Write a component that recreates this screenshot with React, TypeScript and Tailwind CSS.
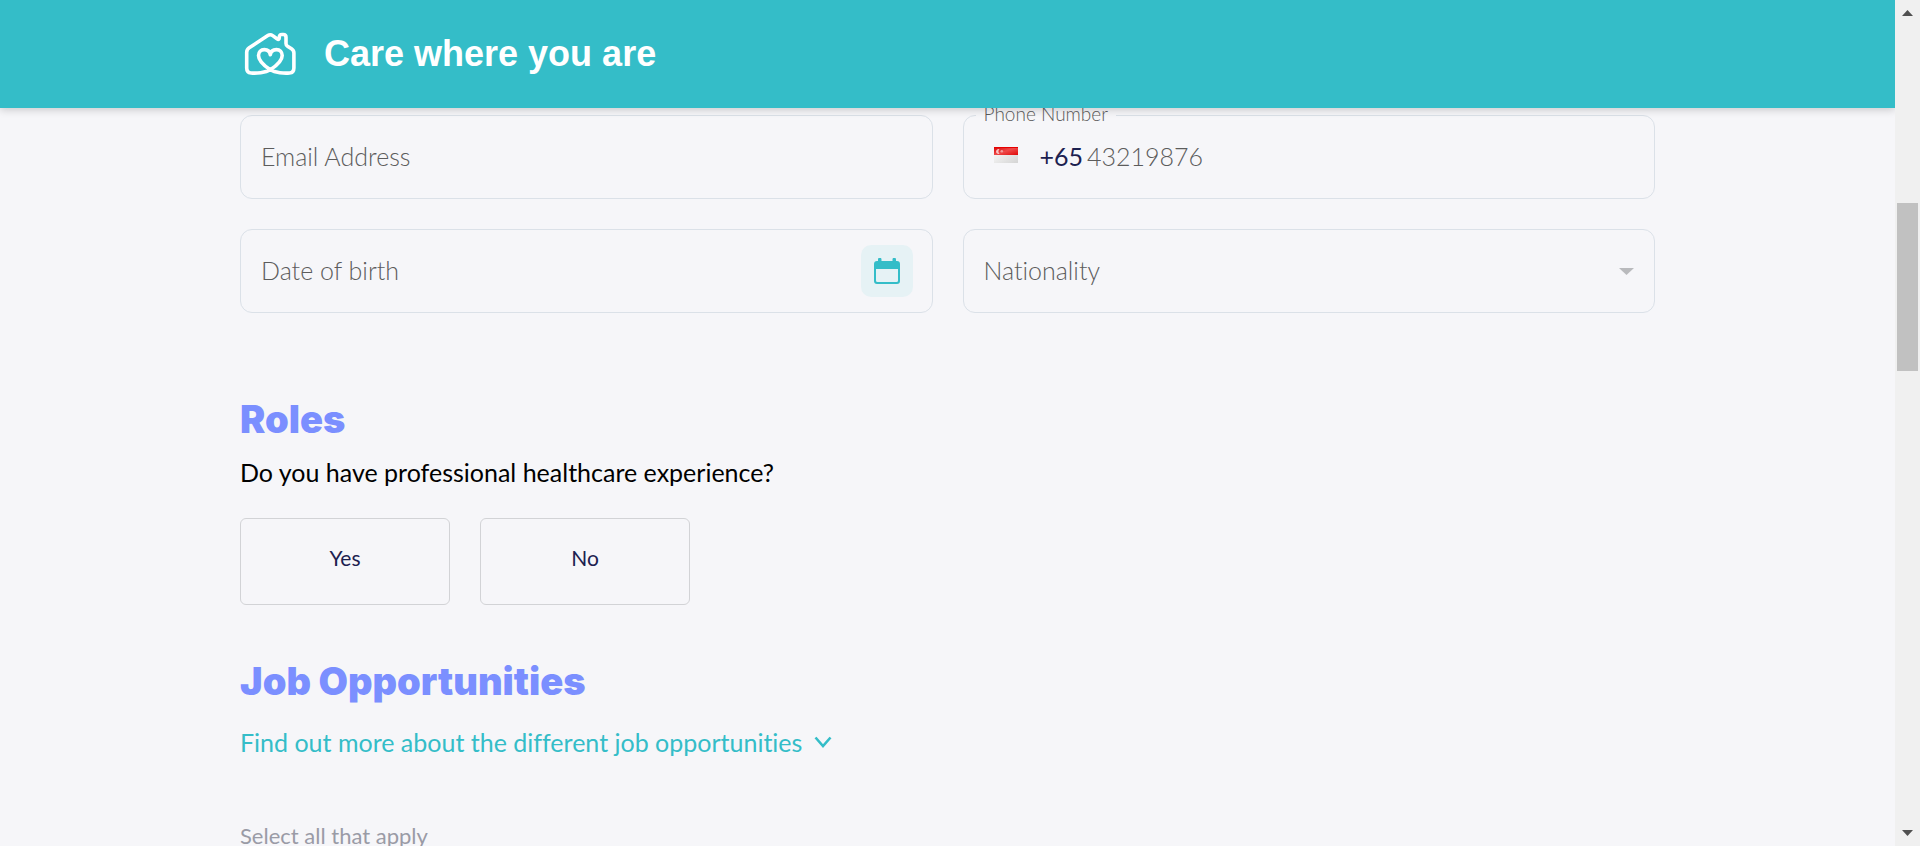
import type { ReactNode } from "react";

const fieldBox =
  "flex h-[84px] items-center rounded-xl border border-[#dbe1e8] pl-5 pr-[19px]";
const fieldText =
  "w-full min-w-0 bg-transparent text-[25px] font-light text-[#3f3f3f] outline-none placeholder:text-[#5c5c5c] placeholder:opacity-100";

function HouseLogo() {
  return (
    <svg
      className="h-11 w-[52px] shrink-0"
      viewBox="0 0 52 44"
      fill="none"
      stroke="white"
      strokeWidth="3.6"
      strokeLinecap="round"
      strokeLinejoin="round"
      aria-hidden="true"
    >
      <path d="M26.300 37.800C20.500 34 14.500 29.500 14.500 23.500C14.500 20 17 17.600 20.300 17.600C23.500 17.600 25.900 19.500 26.300 22.800C26.700 19.500 29.100 17.600 32.500 17.600C35.800 17.600 38.200 20 38.200 23.500C38.200 29.500 32.100 34 26.300 37.800C21.500 40.800 12 41.500 7 41C4 40.700 2.700 39 2.700 36V20.500C2.700 18.200 3.200 17.100 5.200 15.800L23.800 3.600C25.600 2.400 27 2.400 28.700 3.600L33 6.800C34.600 7.900 35.300 7.200 35.300 5.500C35.300 3.200 36 2.500 38 2.500H39.300C41.200 2.500 42 3.300 42 5.200V11.500C42 13 42.300 13.500 43.500 14.200L47.500 16.800C49.500 18.100 49.900 18.900 49.900 21V36C49.900 39 48.500 40.700 45.500 41C40.500 41.500 31.100 40.800 26.300 37.800Z" />
    </svg>
  );
}

function SingaporeFlag() {
  return (
    <svg className="mb-1 h-4 w-6 shrink-0" viewBox="0 0 24 16" aria-hidden="true">
      <defs>
        <linearGradient id="flagRed" x1="0" y1="0" x2="1" y2="1">
          <stop offset="0" stopColor="#d90000" />
          <stop offset="0.5" stopColor="#ee4a4a" />
          <stop offset="1" stopColor="#e00808" />
        </linearGradient>
        <linearGradient id="flagWhite" x1="0" y1="0" x2="1" y2="1">
          <stop offset="0" stopColor="#ffffff" />
          <stop offset="1" stopColor="#d4d4d4" />
        </linearGradient>
      </defs>
      <rect width="24" height="16" fill="url(#flagWhite)" />
      <rect width="24" height="8" fill="url(#flagRed)" />
      <rect width="24" height="1" fill="#e60000" />
      <path d="M5.500 2.200a2.500 2.500 0 1 0 0 4.600a3 3 0 0 1 0-4.600Z" fill="#f9c4c4" />
      <circle cx="7.800" cy="4.300" r="1.300" fill="#f39a9a" />
    </svg>
  );
}

function CalendarIcon() {
  return (
    <svg className="h-[26px] w-[26px]" viewBox="0 0 26 26" aria-hidden="true">
      <path
        fill="#34bdc8"
        fillRule="evenodd"
        d="M4 1.500a1.500 1.500 0 0 1 3.500 0V3H18.500V1.500a1.500 1.500 0 0 1 3.500 0V3H23a3 3 0 0 1 3 3V23a3 3 0 0 1-3 3H3a3 3 0 0 1-3-3V6a3 3 0 0 1 3-3H4ZM2 11V22.500A1.500 1.500 0 0 0 3.500 24H22.500A1.500 1.500 0 0 0 24 22.500V11Z"
      />
    </svg>
  );
}

function SectionTitle({ children }: { children: ReactNode }) {
  return (
    <h2 className="font-['Inter',sans-serif] text-[38px] leading-[42px] font-black text-[#7b8fff]">
      {children}
    </h2>
  );
}

function ChoiceButton({ children }: { children: ReactNode }) {
  return (
    <button
      type="button"
      className="h-[87px] w-[210px] rounded-md border border-[#d2d3d6] pb-2 text-[21px] text-[#1c2150]"
    >
      {children}
    </button>
  );
}

function ScrollRail() {
  return (
    <div
      className="relative z-20 flex w-[25px] shrink-0 flex-col items-center bg-[#f0f0f0]"
      aria-hidden="true"
    >
      <svg className="mt-[10px] h-[6px] w-[11px]" viewBox="0 0 11 6">
        <path d="M0 6L5.500 0L11 6Z" fill="#505050" />
      </svg>
      <div className="mt-[187px] h-[168px] w-[21px] bg-[#c1c1c1]" />
      <svg className="mt-auto mb-[10px] h-[6px] w-[11px]" viewBox="0 0 11 6">
        <path d="M0 0H11L5.500 6Z" fill="#505050" />
      </svg>
    </div>
  );
}

export default function App() {
  return (
    <div className="flex h-screen overflow-hidden bg-[#f6f6f9] font-['Lato',sans-serif] [font-variant-ligatures:none]">
      <div className="flex min-w-0 flex-1 flex-col">
        <header className="relative z-10 shrink-0 bg-[#34bdc8] px-6 shadow-[0_2px_8px_rgba(0,0,0,0.18)]">
          <div className="mx-auto flex h-[108px] w-full max-w-[1415px] items-center gap-7 pl-1">
            <HouseLogo />
            <h1 className="font-['Liberation_Sans',Arial,sans-serif] text-[36px] font-bold text-white">
              Care where you are
            </h1>
          </div>
        </header>

        <main className="min-h-0 flex-1 px-6 pt-[7px]">
          <form className="mx-auto w-full max-w-[1415px]">
            <div className="grid grid-cols-2 gap-[30px]">
              <div className={fieldBox}>
                <input type="email" aria-label="Email Address" placeholder="Email Address" className={fieldText} />
              </div>

              <div className={`relative ${fieldBox}`}>
                <label
                  htmlFor="phone"
                  className="absolute -top-[14px] left-3 bg-[#f6f6f9] px-2 text-[19px] leading-6 font-light text-[#5c5c5c]"
                >
                  Phone Number
                </label>
                <button
                  type="button"
                  aria-label="Country code"
                  className="ml-[10px] flex items-center gap-[22px] text-[25px] text-[#1c2150]"
                >
                  <SingaporeFlag />
                  <span>+65</span>
                </button>
                <input id="phone" type="tel" placeholder="43219876" className={`ml-1 ${fieldText}`} />
              </div>

              <div className={fieldBox}>
                <input type="text" aria-label="Date of birth" placeholder="Date of birth" className={fieldText} />
                <button
                  type="button"
                  aria-label="Choose date"
                  className="flex size-[52px] shrink-0 items-center justify-center rounded-[10px] bg-[#e6f2f5]"
                >
                  <CalendarIcon />
                </button>
              </div>

              <div className={`relative ${fieldBox}`}>
                <select
                  aria-label="Nationality"
                  defaultValue=""
                  className="h-full w-full appearance-none bg-transparent text-[25px] font-light text-[#5c5c5c] outline-none"
                >
                  <option value="">Nationality</option>
                  <option value="SG">Singaporean</option>
                </select>
                <svg
                  className="pointer-events-none absolute right-5 h-[7px] w-[15px]"
                  viewBox="0 0 15 7"
                  aria-hidden="true"
                >
                  <path d="M0 0H15L7.500 7Z" fill="#b9babd" />
                </svg>
              </div>
            </div>

            <section className="pt-[85px]">
              <SectionTitle>Roles</SectionTitle>
              <p className="mt-4 text-[25px] leading-8 text-black">
                Do you have professional healthcare experience?
              </p>
              <div className="mt-[30px] flex gap-[30px]">
                <ChoiceButton>Yes</ChoiceButton>
                <ChoiceButton>No</ChoiceButton>
              </div>
            </section>

            <section className="pt-[55px]">
              <SectionTitle>Job Opportunities</SectionTitle>
              <button
                type="button"
                className="mt-6 flex items-center gap-3 text-[25px] leading-8 text-[#34bdc8]"
              >
                Find out more about the different job opportunities
                <svg className="h-3 w-[18px]" viewBox="0 0 18 12" fill="none" aria-hidden="true">
                  <path d="M1.500 1.500L9 10L16.500 1.500" stroke="#34bdc8" strokeWidth="2.600" />
                </svg>
              </button>
              <p className="mt-[62px] text-[22px] leading-8 text-[#9a9ba6]">Select all that apply</p>
            </section>
          </form>
        </main>
      </div>
      <ScrollRail />
    </div>
  );
}
